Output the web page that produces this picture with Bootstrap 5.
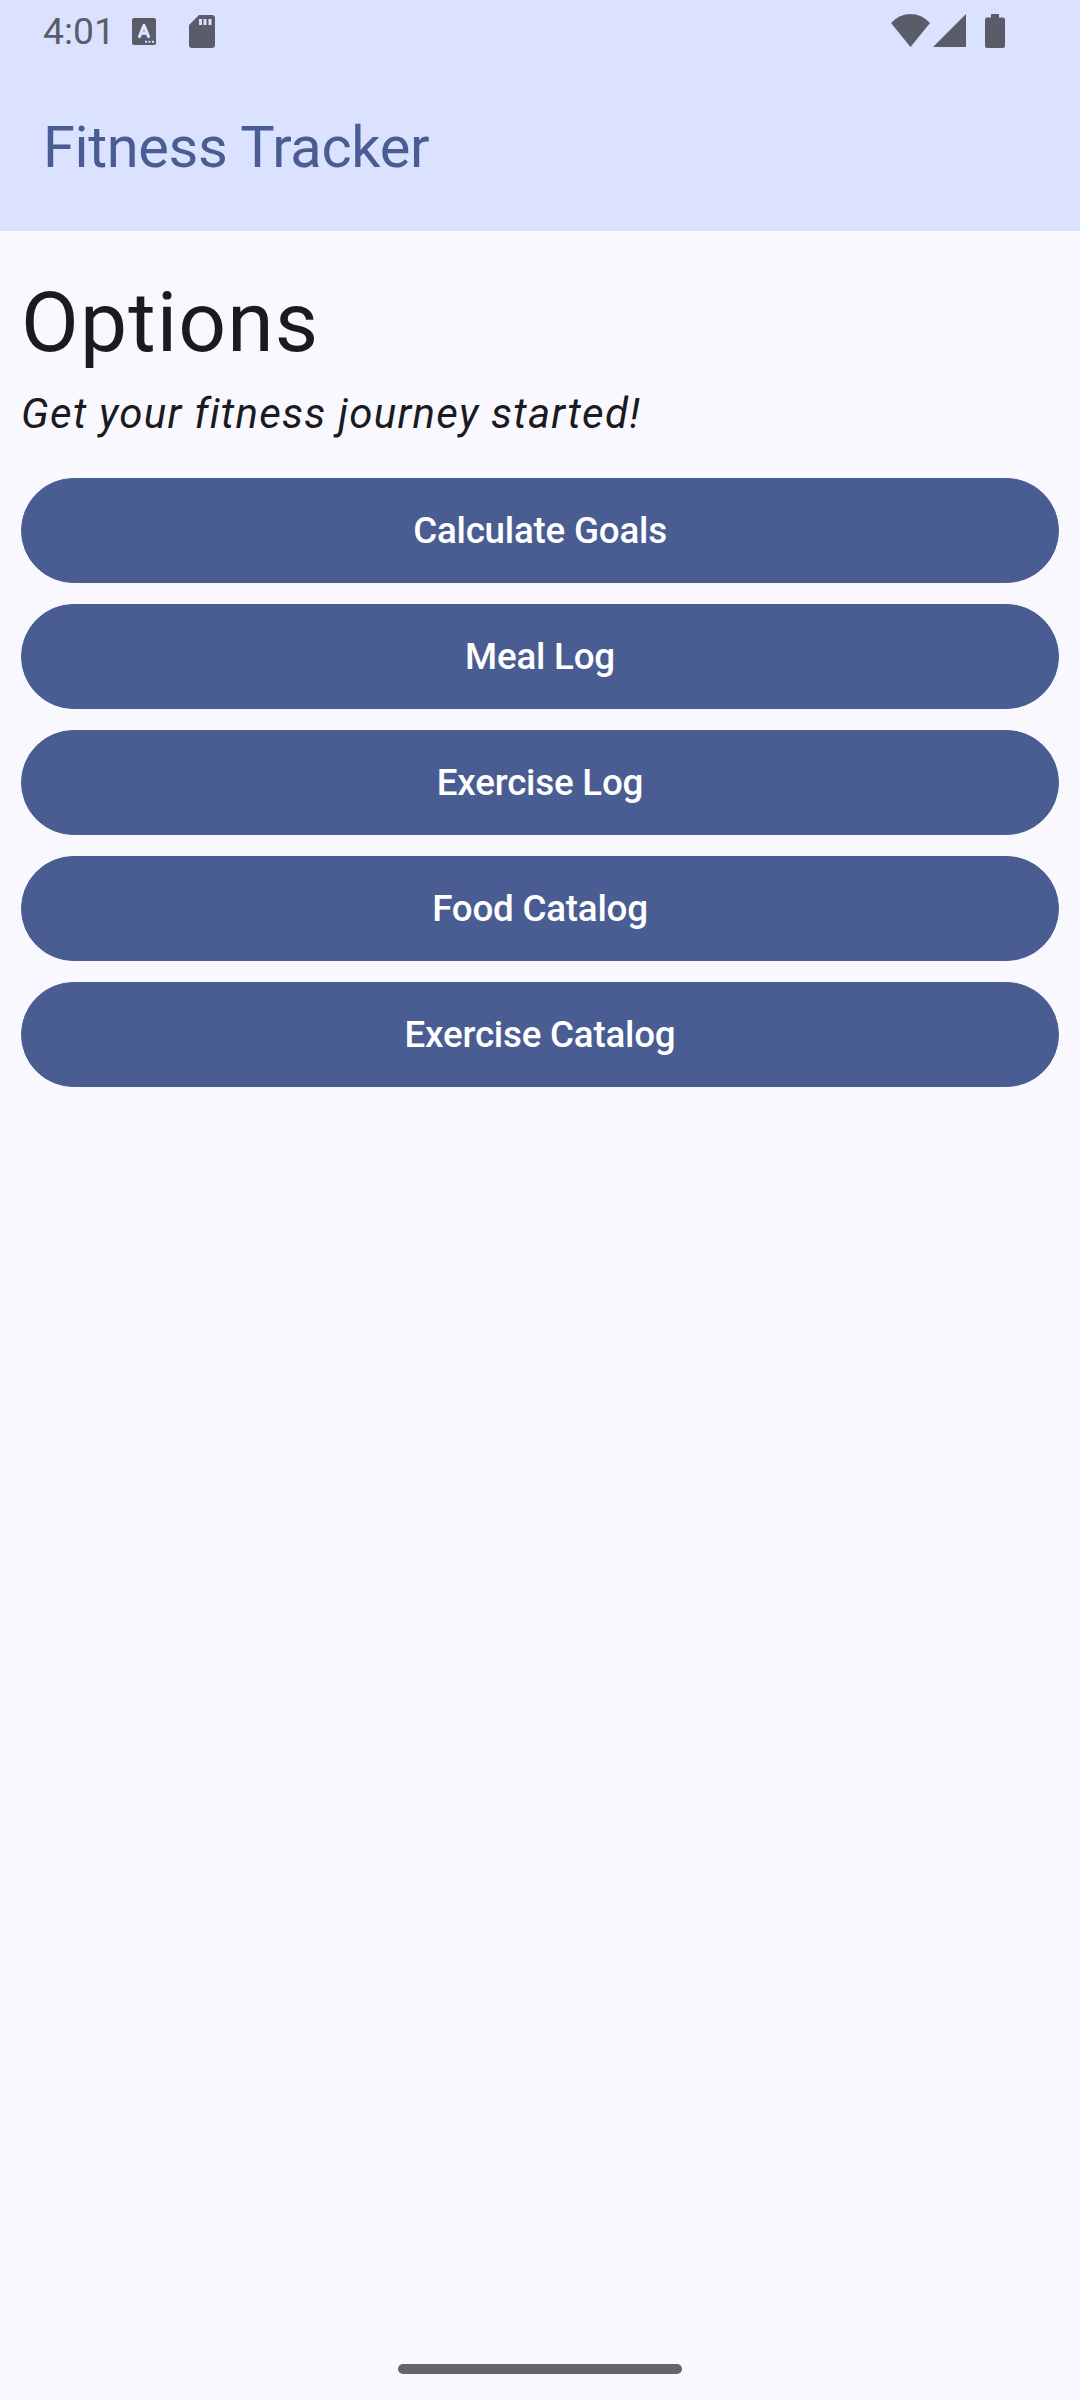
<!DOCTYPE html>
<html lang="en"><head><meta charset="utf-8"><meta name="viewport" content="width=device-width, initial-scale=1"><title>Fitness Tracker</title>
<link href="https://cdn.jsdelivr.net/npm/bootstrap@5.3.0/dist/css/bootstrap.min.css" rel="stylesheet">
<style>
body{font-family:Roboto,sans-serif;background:#faf8ff;color:#1a1b21;height:2400px}
.top-area{background:#dae2ff;height:231px;color:#495d92}
.status-row{height:63px;padding:0 75px 0 43px;color:#5a5c69}
.status-row svg{display:block;flex:none;fill:currentColor}
.status-row .icon-right{margin-bottom:2px}
.clock{font-size:37.3px;line-height:63px;width:89px}
.icon-card{margin-left:33px}
.icon-signal{margin-left:3px}
.icon-battery{margin-left:19px}
.app-title{font-size:57.75px;line-height:73.5px;padding:47.500px 0 0 43px;letter-spacing:-.36px}
.content-area{padding:39px 21px 0}
.page-title{font-size:84px;line-height:105px;letter-spacing:1.1px}
.tagline{font-size:42px;line-height:63px;letter-spacing:1.27px;margin-top:7px}
.btn-option{--bs-btn-color:#fff;--bs-btn-bg:#495d92;--bs-btn-border-color:#495d92;--bs-btn-hover-color:#fff;--bs-btn-hover-bg:#40517f;height:105px;font-size:36.75px;font-weight:500;letter-spacing:-.22px}
.option-list{gap:21px;margin-top:33px}
.home-handle{width:284px;height:10px;background:#656567;margin-bottom:26px}
</style></head>
<body class="d-flex flex-column">
<header class="top-area">
<div class="status-row d-flex align-items-center">
<span class="clock">4:01</span>
<svg width="24" height="27" viewBox="0 0 24 27" aria-hidden="true"><path fill-rule="evenodd" d="M2 0H22Q24 0 24 2V25Q24 27 22 27H2Q0 27 0 25V2Q0 0 2 0ZM13 22.7v2h2v-2ZM16.5 22.7v2h2v-2ZM20 22.7v2h2v-2Z"/><path d="M7.5 18.5 12 7.5 16.5 18.5M9 15.2h6" fill="none" stroke="#dae2ff" stroke-width="3.2" stroke-linecap="round" stroke-linejoin="round"/></svg>
<svg class="icon-card" width="26" height="33" viewBox="0 0 26 33" aria-hidden="true"><path fill-rule="evenodd" d="M10 0H23Q26 0 26 3V30Q26 33 23 33H3Q0 33 0 30V10ZM10 4v6h3V4ZM14.5 4v6h3V4ZM19.5 4v6h3V4Z"/></svg>
<svg class="icon-right ms-auto" width="39" height="33" viewBox="0 0 39 33" aria-hidden="true"><path d="M19.5 33 0 9Q8.500 0 19.500 0T39 9Z"/></svg>
<svg class="icon-right icon-signal" width="33" height="33" viewBox="0 0 33 33" aria-hidden="true"><path d="M33 0V33H0Z"/></svg>
<svg class="icon-right icon-battery" width="20" height="34" viewBox="0 0 20 34" aria-hidden="true"><path d="M6 0h8v3.500h4q2 0 2 2V32q0 2-2 2H2q-2 0-2-2V5.500q0-2 2-2h4Z"/></svg>
</div>
<h1 class="app-title fw-normal mb-0">Fitness Tracker</h1>
</header>
<main class="content-area flex-grow-1">
<h2 class="page-title fw-normal mb-0">Options</h2>
<p class="tagline fst-italic mb-0">Get your fitness journey started!</p>
<div class="option-list d-flex flex-column">
<button type="button" class="btn btn-option rounded-pill">Calculate Goals</button>
<button type="button" class="btn btn-option rounded-pill">Meal Log</button>
<button type="button" class="btn btn-option rounded-pill">Exercise Log</button>
<button type="button" class="btn btn-option rounded-pill">Food Catalog</button>
<button type="button" class="btn btn-option rounded-pill">Exercise Catalog</button>
</div></main>
<div class="home-handle rounded-pill mx-auto"></div>
<script src="https://cdn.jsdelivr.net/npm/bootstrap@5.3.0/dist/js/bootstrap.bundle.min.js"></script>
</body></html>
